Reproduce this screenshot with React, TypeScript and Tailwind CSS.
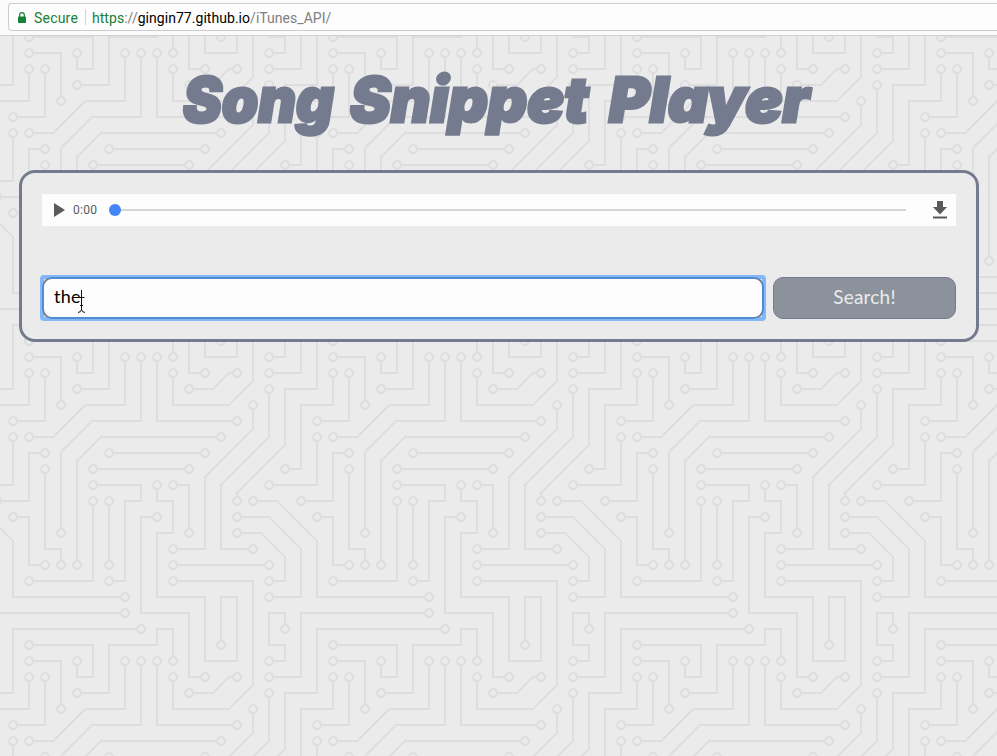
const TRACES =
  'M44.1 224a5 5 0 1 1 0 2H0v-2h44.1zm160 48a5 5 0 1 1 0 2H82v-2h122.1zm57.8-46a5 5 0 1 1 0-2H304v2h-42.1zm0 16a5 5 0 1 1 0-2H304v2h-42.1zm6.2-114a5 5 0 1 1 0 2h-86.2a5 5 0 1 1 0-2h86.2zm-256-48a5 5 0 1 1 0 2H0v-2h12.1zm185.8 34a5 5 0 1 1 0-2h86.2a5 5 0 1 1 0 2h-86.2zM258 12.1a5 5 0 1 1-2 0V0h2v12.1zm-64 208a5 5 0 1 1-2 0v-54.2a5 5 0 1 1 2 0v54.2zm48-198.2V80h62v2h-64V21.9a5 5 0 1 1 2 0zm16 16V64h46v2h-48V37.9a5 5 0 1 1 2 0zm-128 96V208h16v12.1a5 5 0 1 1-2 0V210h-16v-76.1a5 5 0 1 1 2 0zm-5.9-21.9a5 5 0 1 1 0 2H114v48H85.9a5 5 0 1 1 0-2H112v-48h12.1zm-6.2 130a5 5 0 1 1 0-2H176v-74.1a5 5 0 1 1 2 0V242h-60.1zm-16-64a5 5 0 1 1 0-2H114v48h10.1a5 5 0 1 1 0 2H112v-48h-10.1zM66 284.1a5 5 0 1 1-2 0V274H50v30h-2v-32h18v12.1zM236.1 176a5 5 0 1 1 0 2H226v94h48v32h-2v-30h-48v-98h12.1zm25.8-30a5 5 0 1 1 0-2H274v44.1a5 5 0 1 1-2 0V146h-10.1zm-64 96a5 5 0 1 1 0-2H208v-80h16v-14h-42.1a5 5 0 1 1 0-2H226v18h-16v80h-12.1zm86.2-210a5 5 0 1 1 0 2H272V0h2v32h10.1zM98 101.9V146H53.9a5 5 0 1 1 0-2H96v-42.1a5 5 0 1 1 2 0zM53.9 34a5 5 0 1 1 0-2H80V0h2v34H53.9zm60.1 3.9V66H82v64H69.9a5 5 0 1 1 0-2H80V64h32V37.9a5 5 0 1 1 2 0zM101.9 82a5 5 0 1 1 0-2H128V37.9a5 5 0 1 1 2 0V82h-28.1zm16-64a5 5 0 1 1 0-2H146v44.1a5 5 0 1 1-2 0V18h-26.1zm102.2 270a5 5 0 1 1 0 2H98v14h-2v-16h124.1zM242 149.9V160h16v34h-16v62h48v48h-2v-46h-48v-66h16v-30h-16v-12.1a5 5 0 1 1 2 0zM53.9 18a5 5 0 1 1 0-2H64V2H48V0h18v18H53.9zm112 32a5 5 0 1 1 0-2H192V0h50v2h-48v48h-28.1zm-48-48a5 5 0 0 1-9.8-2h2.07a3 3 0 1 0 5.66 0H178v34h-18V21.9a5 5 0 1 1 2 0V32h14V2h-58.1zm0 96a5 5 0 1 1 0-2H137l32-32h39V21.9a5 5 0 1 1 2 0V66h-40.17l-32 32H117.9zm28.1 90.1a5 5 0 1 1-2 0v-76.51L175.59 80H224V21.9a5 5 0 1 1 2 0V82h-49.59L146 112.41v75.69zm16 32a5 5 0 1 1-2 0v-99.51L184.59 96H300.1a5 5 0 0 1 3.9-3.9v2.07a3 3 0 0 0 0 5.66v2.07a5 5 0 0 1-3.9-3.9H185.41L162 121.41v98.69zm-144-64a5 5 0 1 1-2 0v-3.51l48-48V48h32V0h2v50H66v55.41l-48 48v2.69zM50 53.9v43.51l-48 48V208h26.1a5 5 0 1 1 0 2H0v-65.41l48-48V53.9a5 5 0 1 1 2 0zm-16 16V89.41l-34 34v-2.82l32-32V69.9a5 5 0 1 1 2 0zM12.1 32a5 5 0 1 1 0 2H9.41L0 43.41V40.6L8.59 32h3.51zm265.8 18a5 5 0 1 1 0-2h18.69l7.41-7.41v2.82L297.41 50H277.9zm-16 160a5 5 0 1 1 0-2H288v-71.41l16-16v2.82l-14 14V210h-28.1zm-208 32a5 5 0 1 1 0-2H64v-22.59L40.59 194H21.9a5 5 0 1 1 0-2H41.41L66 216.59V242H53.9zm150.2 14a5 5 0 1 1 0 2H96v-56.6L56.6 162H37.9a5 5 0 1 1 0-2h19.5L98 200.6V256h106.1zm-150.2 2a5 5 0 1 1 0-2H80v-46.59L48.59 178H21.9a5 5 0 1 1 0-2H49.41L82 208.59V258H53.9zM34 39.8v1.61L9.41 66H0v-2h8.59L32 40.59V0h2v39.8zM2 300.1a5 5 0 0 1 3.9 3.9H3.83A3 3 0 0 0 0 302.17V256h18v48h-2v-46H2v42.1zM34 241v63h-2v-62H0v-2h34v1zM17 18H0v-2h16V0h2v18h-1zm273-2h14v2h-16V0h2v16zm-32 273v15h-2v-14h-14v14h-2v-16h18v1zM0 92.1A5.02 5.02 0 0 1 6 97a5 5 0 0 1-6 4.9v-2.07a3 3 0 1 0 0-5.66V92.1zM80 272h2v32h-2v-32zm37.9 32h-2.07a3 3 0 0 0-5.66 0h-2.07a5 5 0 0 1 9.8 0zM5.9 0A5.02 5.02 0 0 1 0 5.9V3.83A3 3 0 0 0 3.83 0H5.9zm294.2 0h2.07A3 3 0 0 0 304 3.83V5.9a5 5 0 0 1-3.9-5.9zm3.9 300.1v2.07a3 3 0 0 0-1.83 1.83h-2.07a5 5 0 0 1 3.9-3.9z'

const PADS: [number, number][] = [
  [49, 225], [209, 273], [257, 225], [257, 241], [273, 129], [177, 129], [17, 81], [193, 113],
  [289, 113], [257, 17], [193, 225], [193, 161], [241, 17], [257, 33], [145, 225], [129, 129],
  [129, 113], [81, 161], [113, 241], [177, 161], [97, 177], [129, 225], [65, 289], [241, 177],
  [257, 145], [273, 193], [193, 241], [177, 145], [289, 33], [97, 97], [49, 145], [49, 33],
  [113, 33], [65, 129], [97, 81], [129, 33], [113, 17], [145, 65], [225, 289], [241, 145],
  [49, 17], [161, 49], [161, 17], [113, 97], [209, 17], [145, 193], [225, 17], [161, 225],
  [17, 161], [49, 49], [33, 209], [33, 65], [17, 33], [273, 49], [257, 209], [49, 241],
  [17, 193], [209, 257], [33, 161], [49, 257], [17, 177],
]

function CircuitBoard() {
  return (
    <svg className="absolute inset-0 h-full w-full" aria-hidden="true">
      <defs>
        <pattern id="circuit" x="-84" y="0" width="304" height="304" patternUnits="userSpaceOnUse">
          <path d={TRACES} fill="#dedee0" />
          {PADS.map(([x, y]) => (
            <circle key={`${x}-${y}`} cx={x} cy={y} r="3" fill="#ebebeb" />
          ))}
        </pattern>
      </defs>
      <rect width="100%" height="100%" fill="url(#circuit)" />
    </svg>
  )
}

function AddressBar() {
  return (
    <header className="h-9 border-b border-[#cfcfcf] bg-[#fbfbfb] pt-[3px] pl-2">
      <div className="flex h-7 items-center rounded-l-[4px] border border-r-0 border-[#cdcdcd] bg-[#fdfdfd] pl-[9px] font-['Roboto',sans-serif] text-[14px] leading-none">
        <svg className="h-[11px] w-2" viewBox="0 0 8 11">
          <rect y="4.5" width="8" height="6.5" rx="0.8" fill="#178038" />
          <path d="M1.7 5V3a2.3 2.3 0 0 1 4.6 0v2" fill="none" stroke="#178038" strokeWidth="1.2" />
        </svg>
        <span className="ml-2 w-[46px] pt-px tracking-[0.2px] text-[#178038]">Secure</span>
        <span className="ml-[5px] h-4 w-px bg-[#d4d4d4]" />
        <span className="ml-[6px] pt-px tracking-[0.04px] whitespace-nowrap text-[#808080]">
          <span className="text-[#178038]">https</span>://<span className="text-black">gingin77.github.io</span>/iTunes_API/
        </span>
      </div>
    </header>
  )
}

function Title() {
  return (
    <h1 className="flex h-[134px] pt-[24px] pl-[183px] font-['Inter',sans-serif] text-[62px] leading-[80px] font-black whitespace-nowrap text-[#757b8f] italic [-webkit-text-stroke:3px_#757b8f]">
      <span className="w-[167px]"><span className="inline-block origin-left scale-x-[0.94]">Song</span></span>
      <span className="w-[259px]"><span className="inline-block origin-left scale-x-[0.985]">Snippet</span></span>
      <span><span className="inline-block origin-left">Player</span></span>
    </h1>
  )
}

function AudioPlayer() {
  return (
    <div className="flex h-8 items-center bg-[#fdfdfd] pr-2 pl-3">
      <svg className="h-[14px] w-[11px]" viewBox="0 0 11 14">
        <path d="M0 0l11 7-11 7z" fill="#5a5a5a" />
      </svg>
      <span className="ml-2 w-[36px] font-['Roboto',sans-serif] text-[12px] tracking-[0.25px] text-[#5a5a5a]">0:00</span>
      <span className="h-3 w-3 rounded-full bg-[#4285f4]" />
      <span className="h-[2px] w-[785px] bg-[#d5d5d5]" />
      <svg className="ml-[27px] h-[18px] w-[14px]" viewBox="0 0 14 18">
        <path d="M4 0h6v6h4l-7 7.5L0 6h4zM0 15.5h14v2H0z" fill="#5a5a5a" />
      </svg>
    </div>
  )
}

export default function App() {
  return (
    <div className="flex h-[756px] w-[997px] flex-col overflow-hidden bg-[#ebebeb]">
      <AddressBar />
      <div className="relative flex-1">
        <CircuitBoard />
        <main className="relative">
          <Title />
          <section className="mr-[18px] ml-[19px] h-[172px] rounded-[16px] border-[3px] border-[#757b8f] bg-[#ebebeb] px-5 pt-[21px]">
            <AudioPlayer />
            <form className="mt-[51px] flex gap-[9px]" onSubmit={(e) => e.preventDefault()}>
              <div className="relative flex h-[42px] w-[722px] items-center rounded-[10px] border-2 border-[#757b8f] bg-[#fdfdfd] pb-[3px] pl-[10px] font-['Lato',sans-serif] text-[18px] text-black">
                <span className="tracking-[0.2px]">the</span>
                <svg className="absolute top-[11px] left-[32px] h-[23px] w-[10px]" viewBox="0 0 10 23">
                  <path d="M5.5 0v20M2.500 7.500h6M4 15.500h3M2 22.500q3-.3 3.500-3q.5 2.700 3.500 3" fill="none" stroke="#111" strokeWidth="1" />
                </svg>
                <span className="absolute -inset-[4px] rounded-[4px] border-4 border-[#3c96ff]/60" />
              </div>
              <button className="h-[42px] w-[183px] rounded-[10px] border border-[#757b8f] bg-[#8b929c] pb-[2px] font-['Lato',sans-serif] text-[19px] tracking-[0.2px] text-[#ebebeb]">
                Search!
              </button>
            </form>
          </section>
        </main>
      </div>
    </div>
  )
}
